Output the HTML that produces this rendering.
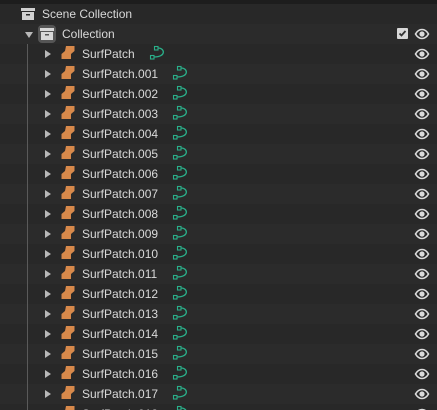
<!DOCTYPE html><html style="overflow:hidden;height:410px"><head><style>
body{margin:0;width:437px;height:410px;overflow:hidden;background:#282828;font-family:"Liberation Sans","DejaVu Sans",sans-serif;font-size:12px;color:#d9d9d9;position:relative}
.r{position:absolute;left:0;width:437px;height:20px}
.t{position:absolute;top:3px;line-height:14px}
.eye{position:absolute;left:414px;top:4px}
.arr{position:absolute;left:45px;top:6px;width:0;height:0;border-left:6px solid #b8b8b8;border-top:4px solid transparent;border-bottom:4px solid transparent}
.ob{position:absolute;left:61px;top:1px}
.cv{position:absolute;top:0px}
</style></head><body>
<div style="position:absolute;left:0;top:0;width:437px;height:4px;background:#1d1d1d"></div>
<div id="c"></div>
<script>
(function(){
var eye='<svg class="eye" width="16" height="12" viewBox="0 0 16 12"><path d="M1.5 6C3.5 2.5 6 1.5 8 1.5S12.5 2.5 14.5 6C12.5 9.5 10 10.5 8 10.5S3.5 9.5 1.5 6Z" fill="none" stroke="#dcdcdc" stroke-width="1.6"/><circle cx="8" cy="6" r="2.6" fill="#dcdcdc"/></svg>';
var ob='<svg class="ob" width="14" height="15" viewBox="0 0 14 15"><path d="M5 1H13.5V6L10 9V14H0.5V9L4 6Z" fill="#d7894b"/></svg>';
function cv(x){return '<svg class="cv" style="left:'+x+'px" width="18" height="18" viewBox="0 0 18 18"><path d="M9 4C16 4 17.5 13 5 13" fill="none" stroke="#2ab08a" stroke-width="1.3"/><rect x="5.5" y="2.5" width="3.5" height="3.5" fill="none" stroke="#2ab08a" stroke-width="1.1"/><rect x="1.5" y="11.5" width="3.5" height="3.5" fill="none" stroke="#2ab08a" stroke-width="1.1"/></svg>';}
var h='';
h+='<div class="r" style="top:4px;background:#282828"><svg style="position:absolute;left:21px;top:3px" width="14" height="14" viewBox="0 0 14 14"><rect x="0" y="1" width="14" height="3" fill="#d0d0d0"/><rect x="1" y="5" width="12" height="8" fill="#d0d0d0"/><rect x="5" y="7" width="4" height="1.5" fill="#282828"/></svg><span class="t" style="left:42px">Scene Collection</span></div>';
h+='<div class="r" style="top:24px;background:#2b2b2b"><div style="position:absolute;left:25px;top:8px;border-top:6px solid #b8b8b8;border-left:4px solid transparent;border-right:4px solid transparent"></div><div style="position:absolute;left:38px;top:1px;width:18px;height:18px;background:#555;border-radius:4px"></div><svg style="position:absolute;left:40px;top:3px" width="14" height="14" viewBox="0 0 14 14"><rect x="0" y="1" width="14" height="3" fill="#d8d8d8"/><rect x="1" y="5" width="12" height="8" fill="#d8d8d8"/><rect x="5" y="7" width="4" height="1.5" fill="#555"/></svg><span class="t" style="left:62px">Collection</span><svg style="position:absolute;left:397px;top:4px" width="11" height="11"><rect width="11" height="11" rx="1" fill="#d8d8d8"/><path d="M2.5 5.5L4.5 7.5L8.5 3" fill="none" stroke="#333" stroke-width="1.8"/></svg>'+eye+'</div>';
for(var i=0;i<19;i++){
 var y=44+i*20, bg=i%2?'#2b2b2b':'#282828';
 var name=i==0?'SurfPatch':'SurfPatch.'+('00'+i).slice(-3);
 h+='<div class="r" style="top:'+y+'px;background:'+bg+(i==18?';height:6px;overflow:hidden':'')+'"><div class="arr"></div>'+ob+'<span class="t" style="left:82px">'+name+'</span>'+cv(i==0?149:172)+eye+'</div>';
}
h+='<div style="position:absolute;left:27px;top:44px;width:1px;height:366px;background:#5a5a5a"></div>';
document.getElementById('c').innerHTML=h;
})();
</script>
</body></html>
